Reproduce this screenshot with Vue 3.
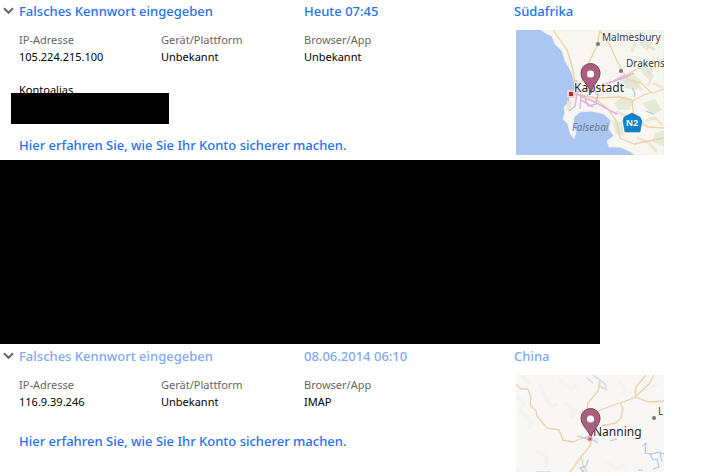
<template>
    <main class="activity">
        <section v-for="entry in entries" :key="entry.id" class="entry" :class="{ seen: entry.seen }">
            <div class="entry-main">
                <button class="title" type="button" aria-expanded="true">
                    <svg class="chevron" viewBox="0 0 11 8" aria-hidden="true">
                        <path d="M1 1.2 L5.5 5.8 L10 1.2" />
                    </svg>
                    <span>Falsches Kennwort eingegeben</span>
                </button>
                <div class="time">{{ entry.time }}</div>

                <dl v-for="fact in entry.facts" :key="fact.label" class="fact">
                    <dt>{{ fact.label }}</dt>
                    <dd>{{ fact.value }}</dd>
                </dl>

                <div v-if="entry.alias" class="alias">
                    <div>Kontoalias</div>
                    <div class="alias-bar"></div>
                </div>

                <a class="help" href="#">Hier erfahren Sie, wie Sie Ihr Konto sicherer machen.</a>
            </div>

            <div class="entry-side">
                <div class="place">{{ entry.place }}</div>

                <!-- Kapstadt -->
                <svg v-if="entry.id === 'za'" class="map" viewBox="0 0 148 125" role="img" aria-label="Karte Kapstadt">
                    <rect width="148" height="125" fill="#abc6f1" />
                    <path class="land" d="M25 0 L31 4 L36 6 L39 14 L46 21 L49 31 L56 43 L59 54 L59 62 L52 64 L54 71 L48 77 L49 83 L47 89 L52 94 L54 103 L58 109 L60 102 L57 96 L58 87 L64 82 L75 81 L88 84 L95 91 L93 99 L98 106 L91 111 L93 117 L104 117 L115 122 L119 125 H148 V0 Z" />
                    <path class="green" d="M103 47 L116 43 L126 51 L121 60 L108 58 Z M121 33 L132 29 L138 39 L133 50 L126 43 Z M98 73 L108 66 L119 71 L113 80 L102 80 Z M96 90 L106 92 L108 106 L99 103 Z M126 73 L139 69 L146 80 L137 85 Z M139 103 L148 100 V116 L136 112 Z M119 5 L129 2 L137 12 L131 21 L123 14 Z M51 70 L56 72 L54 81 L50 80 Z" />
                    <path class="relief" d="M112 2 L119 12 L116 22 M126 2 L130 14 L139 20 M128 37 L136 46 L132 56 M108 52 L117 51 L126 60 M100 82 L111 86 L117 97 M129 91 L139 88 L146 95 M121 108 L132 112 L141 122 M137 53 L147 58" />
                    <path class="road" d="M37 0 L51 20 L56 36 L60 57 M84 0 L81 16 L69 40 L65 55 M84 1 L93 13 L101 31 L106 40 L111 49 L125 53 L136 63 L148 59 M58 64 L80 68 L103 67 L116 70 L118 88 L132 97 L148 98 M76 66 L92 79 L101 92 L104 108 L118 114 L148 108 M70 66 L85 57 L106 47 L121 39 L148 29 M116 71 L128 65 L136 62" />
                    <path class="motorway" d="M57 62 L67 67 L79 72 L93 80 L101 84 M61 62 L78 59 L92 53 L105 49 L118 43 M60 50 L61 64 L59 77 M65 65 L64 79 M68 66 L72 76 L80 74 L82 64 L74 59 M65 70 L77 77 M53 81 L59 76 M96 52 L107 46 L112 47" />
                    <path class="water" d="M91 88 L94 91 M116 58 L119 63 L118 67 M130 81 L137 84" />
                    <circle cx="82" cy="14" r="2" fill="#777" />
                    <circle cx="105" cy="41" r="2" fill="#777" />
                    <rect x="51" y="60" width="8" height="8" fill="#f6cfd0" />
                    <rect x="53" y="62" width="4" height="4" fill="#b02c38" />
                    <text class="town" x="86" y="11">Malmesbury</text>
                    <text class="town" x="110" y="37">Drakens</text>
                    <text class="city" x="58" y="62">Kapstadt</text>
                    <text class="bay" x="56" y="101">Falsebai</text>
                    <path d="M108 87 L116 83 L124 87 L126 91 L124 102 L109 102 L107 91 Z" fill="#0b83cf" stroke="#3b72a3" stroke-width="0.6" />
                    <text class="shield" x="116" y="96">N2</text>
                    <path class="pin" d="M75 63 C73 55 65 51 65 43 A9.5 9.5 0 0 1 84 43 C84 51 76 55 75 63 Z" />
                    <circle cx="74.5" cy="44" r="3.6" fill="#fff" />
                </svg>

                <!-- Nanning -->
                <svg v-else class="map" viewBox="0 0 148 125" role="img" aria-label="Karte Nanning">
                    <rect width="148" height="125" fill="#f8f7f5" />
                    <path class="hills" d="M0 20 L8 29 L4 36 L16 48 L12 54 M24 8 L30 24 L36 32 L42 29 M6 0 L14 10 M43 5 L55 14 L61 9 M48 27 L59 35 L55 43 M102 5 L110 14 L105 20 M124 2 L135 12 L142 9 M89 86 L101 94 L109 90 M20 75 L31 83 L29 92 M0 95 L12 104" />
                    <path class="ridge" d="M77 0 L84 5 L83 11 L91 15 M80 2 L89 9 L90 14 M71 3 L77 8" />
                    <path class="road" d="M0 9 L5 14 L12 14 L15 22 L14 30 L20 36 L21 41 L31 53 L43 55 L47 65 L57 67 L66 63 L72 64 L76 54 M84 9 L82 16 L72 28 L71 36 L74 43 M75 66 L74 71 L65 82 L57 93 L43 109 L39 125 M66 83 L67 91 L72 98 M85 51 L100 48 L105 43 L107 33 L104 28 L115 24 L119 22 L133 27 L148 26 M119 22 L120 12 L130 0 M119 22 L133 9 L138 0 M103 28 L87 34 L77 39" />
                    <path class="river" d="M61 61 L69 63 L76 60 L82 60 M77 65 L82 68 M94 66 L101 64 M113 57 L121 55 M127 71 L130 68 L129 78 L136 79 L143 77 L148 79 M134 79 L137 85 L141 84 L143 92 L137 94 M144 78 L146 87 M72 85 L70 91 L64 93 L68 97 L64 101 L58 98 M66 96 L72 100 M20 97 L35 97 M122 95 L127 95" />
                    <circle cx="138" cy="43" r="2" fill="#777" />
                    <text class="town" x="142" y="40">L</text>
                    <text class="city" x="77" y="61">Nanning</text>
                    <path class="pin" d="M75 63 C73 55 65 51 65 43 A9.5 9.5 0 0 1 84 43 C84 51 76 55 75 63 Z" />
                    <circle cx="74.5" cy="44" r="3.6" fill="#fff" />
                    <circle cx="74" cy="64" r="3" fill="#f2c0bb" />
                    <circle cx="74" cy="64" r="1.8" fill="#d45d66" />
                </svg>
            </div>
        </section>
    </main>
</template>

<script setup>
import { ref } from 'vue';

const entries = ref([
    {
        id: 'za',
        time: 'Heute 07:45',
        place: 'Südafrika',
        seen: false,
        alias: true,
        facts: [
            { label: 'IP-Adresse', value: '105.224.215.100' },
            { label: 'Gerät/Plattform', value: 'Unbekannt' },
            { label: 'Browser/App', value: 'Unbekannt' }
        ]
    },
    {
        id: 'cn',
        time: '08.06.2014 06:10',
        place: 'China',
        seen: true,
        alias: false,
        facts: [
            { label: 'IP-Adresse', value: '116.9.39.246' },
            { label: 'Gerät/Plattform', value: 'Unbekannt' },
            { label: 'Browser/App', value: 'IMAP' }
        ]
    }
]);
</script>

<style>
body {
    margin: 0;
    background: #fff;
}
</style>

<style scoped>
.activity {
    font-family: "Segoe UI", "Noto Sans", "Open Sans", sans-serif;
    font-size: 11px;
    line-height: 17px;
    color: #000;
}

.entry {
    display: grid;
    grid-template-columns: minmax(0, 514fr) minmax(0, 192fr);
    align-items: start;
}

/* 隐藏的条目 */
.entry + .entry::before {
    content: "";
    grid-column: 1 / -1;
    max-width: 600px;
    height: 184px;
    margin-bottom: 1px;
    background: #000;
}

.entry-main {
    display: grid;
    grid-template-columns: minmax(0, 142fr) minmax(0, 143fr) minmax(0, 210fr);
    padding: 0 0 4px 19px;
}

.title,
.time,
.place,
.help {
    font-size: 13px;
    font-weight: 500;
    line-height: 22px;
    color: #2672ec;
    white-space: nowrap;
}

.title {
    grid-column: span 2;
    display: flex;
    align-items: center;
    gap: 5px;
    margin-left: -16px;
    padding: 0;
    border: 0;
    background: none;
    font-family: inherit;
    text-align: left;
    cursor: pointer;
}

.seen .title,
.seen .time,
.seen .place {
    color: #7daaf3;
}

.chevron {
    width: 11px;
    height: 8px;
    fill: none;
    stroke: #666;
    stroke-width: 2;
}

.fact {
    margin: 9px 0 0;
}

.fact dt {
    color: #666;
}

.fact dd {
    margin: 0;
}

.alias {
    grid-column: 1 / -1;
    margin-top: 16px;
}

.alias-bar {
    position: relative;
    width: 158px;
    height: 31px;
    margin: -5px 0 -10px -8px;
    background: #000;
}

.help {
    grid-column: 1 / -1;
    justify-self: start;
    margin-top: 20px;
    text-decoration: none;
}

.place {
    margin-bottom: 8px;
}

.map {
    display: block;
    width: 148px;
    height: 125px;
    margin-left: 2px;
}

.land {
    fill: #f8f6f1;
    stroke: #e9edf0;
}

.green {
    fill: #dfe8ce;
    opacity: 0.8;
}

.relief,
.hills,
.ridge,
.road,
.motorway,
.water,
.river {
    fill: none;
    stroke-linejoin: round;
}

.relief {
    stroke: #e6dfcd;
    stroke-width: 3;
    opacity: 0.7;
}

.hills {
    stroke: #f4f3f2;
    stroke-width: 4;
}

.ridge {
    stroke: #dddfe2;
    stroke-width: 2;
}

.road {
    stroke: #f0d0a5;
    stroke-width: 1.3;
}

.motorway {
    stroke: #dfb4dc;
    stroke-width: 1.5;
}

.water,
.river {
    stroke: #aacaef;
    stroke-width: 1.2;
}

.town {
    font-size: 10px;
    fill: #333;
}

.city {
    font-size: 12px;
    fill: #222;
}

.town,
.city {
    paint-order: stroke;
    stroke: #fff;
    stroke-width: 1.5;
}

.bay {
    font-size: 10px;
    font-style: italic;
    fill: #6c7b96;
}

.shield {
    font-size: 9px;
    font-weight: 700;
    fill: #f4f6c8;
    text-anchor: middle;
}

.pin {
    fill: #a9607e;
    stroke: #7b4059;
    stroke-width: 1;
}
</style>
